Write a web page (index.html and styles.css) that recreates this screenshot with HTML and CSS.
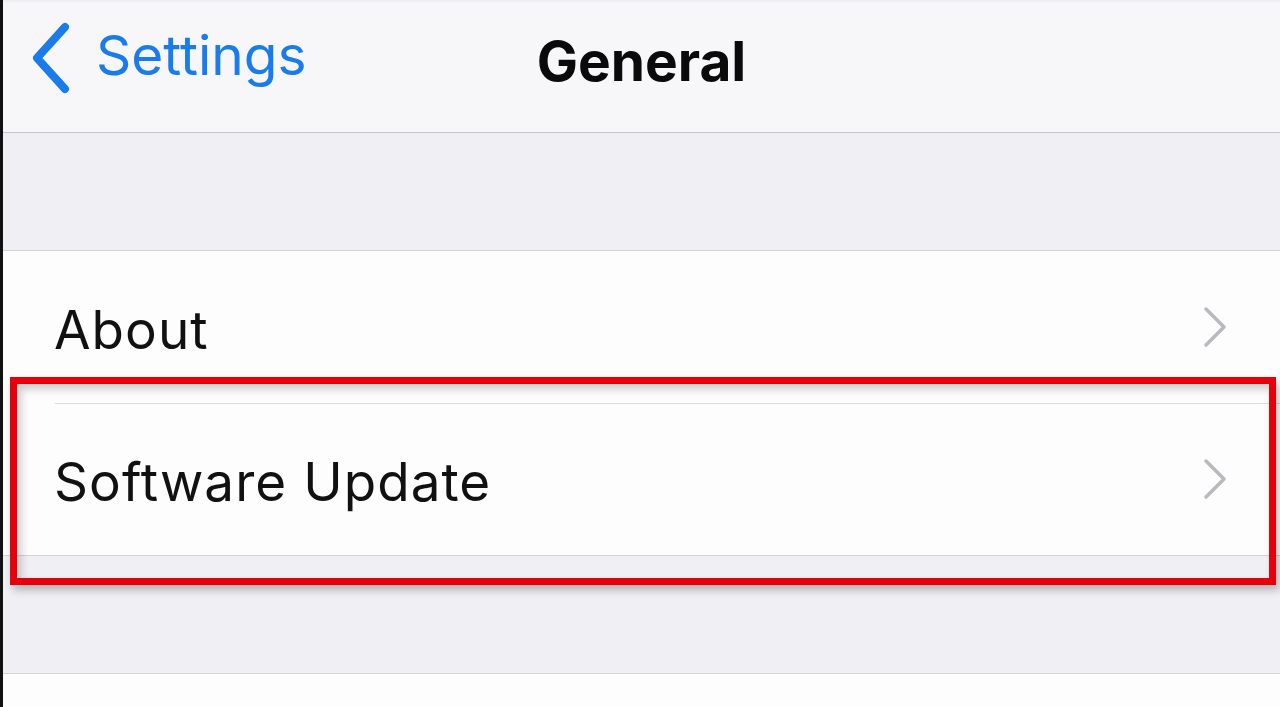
FILE: index.html
```html
<!DOCTYPE html>
<html lang="en">
<head>
  <meta charset="UTF-8">
  <title>General</title>
  <link rel="stylesheet" href="styles.css">
</head>
<body>
  <div class="screen">
    <header class="nav-bar">
      <a class="back" href="#">
        <svg class="back-icon" width="44" height="74" viewBox="0 0 44 74">
          <polyline points="35,6 7,37 35,68" fill="none" stroke="#1a7bea" stroke-width="8" stroke-linecap="round" stroke-linejoin="round"/>
        </svg>
        <span>Settings</span>
      </a>
      <h1 class="nav-title">General</h1>
    </header>

    <div class="spacer"></div>

    <ul class="group">
      <li class="row">
        <span class="label">About</span>
        <svg class="chevron" width="26" height="42" viewBox="0 0 26 42"><polyline points="4,3 22,21 4,39" fill="none" stroke="#b9b9be" stroke-width="3.5" stroke-linecap="round" stroke-linejoin="round"/></svg>
      </li>
      <li class="row">
        <span class="label">Software Update</span>
        <svg class="chevron" width="26" height="42" viewBox="0 0 26 42"><polyline points="4,3 22,21 4,39" fill="none" stroke="#b9b9be" stroke-width="3.5" stroke-linecap="round" stroke-linejoin="round"/></svg>
      </li>
    </ul>

    <div class="spacer"></div>

    <ul class="group">
      <li class="row"></li>
    </ul>

    <!-- highlight overlay -->
    <div class="highlight"></div>
  </div>
</body>
</html>
```

FILE: styles.css
```css
* {
  margin: 0;
  padding: 0;
  box-sizing: border-box;
}

html, body {
  height: 100%;
  overflow: hidden;
}

body {
  font-family: Inter, "Noto Sans", sans-serif;
  background: #111;
}

.screen {
  position: relative;
  height: 100%;
  margin-left: 3px;
  padding-top: 2px;
  background: #efeff4;
  overflow: hidden;
}

/* Nav bar */
.nav-bar {
  position: relative;
  height: 131px;
  display: flex;
  align-items: center;
  justify-content: center;
  background: #f7f7f9;
  border-bottom: 1px solid #c4c4c9;
}

.back {
  position: absolute;
  left: 27px;
  top: 19px;
  display: flex;
  align-items: center;
  gap: 22px;
  color: #1a7bea;
  text-decoration: none;
  font-size: 55px;
}

.back span {
  margin-top: -6px;
}

.nav-title {
  font-size: 55px;
  font-weight: 700;
  color: #0a0a0a;
  margin-top: -12px;
}

.spacer {
  height: 118px;
  border-bottom: 1px solid #d2d2d7;
}

/* Rows */
.group {
  list-style: none;
  background: #fdfdfe;
  border-bottom: 1px solid #d2d2d7;
}

.row {
  height: 152px;
  display: flex;
  align-items: center;
  justify-content: space-between;
  padding: 0 52px 0 51px;
  position: relative;
}

.row + .row::before {
  content: "";
  position: absolute;
  top: 0;
  left: 52px;
  right: 0;
  border-top: 1px solid #dcdce0;
}

.label {
  font-size: 53px;
  letter-spacing: 1.05px;
  color: #111;
  margin-top: 6px;
}

/* Red highlight box */
.highlight {
  position: absolute;
  left: 7px;
  top: 377px;
  width: 1266px;
  height: 208px;
  border: 7px solid #e6000a;
  box-shadow: 3px 5px 8px rgba(0, 0, 0, 0.25), inset 4px 5px 8px rgba(0, 0, 0, 0.2);
}
```
